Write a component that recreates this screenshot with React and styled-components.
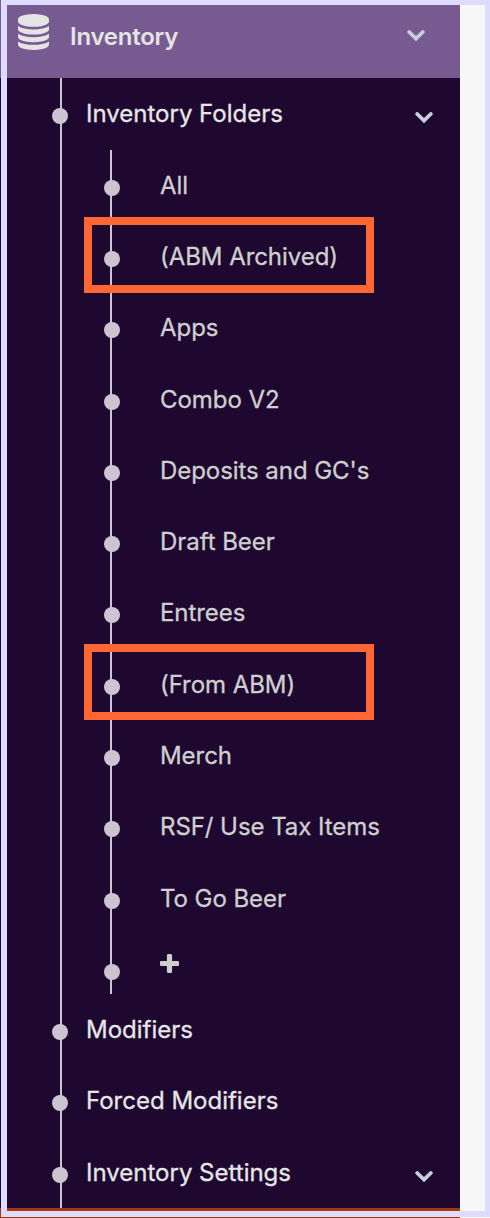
import React from "react";
import styled, { createGlobalStyle } from "styled-components";

const GlobalStyle = createGlobalStyle`
  *, *::before, *::after { box-sizing: border-box; }
  body { margin: 0; background: #f7f7f7; font-family: "Inter", sans-serif; }
  ul { list-style: none; margin: 0; padding: 0; }
`;

const Page = styled.main`
  position: relative;
  width: 490px;
  height: 1218px;
  overflow: hidden;
  background: #f7f7f7;
`;

const Frame = styled.div`
  position: absolute;
  inset: -1px -1px 1px 1px;
  border: 6px solid #dfdbff;
  pointer-events: none;
`;

const Sidebar = styled.nav`
  display: flex;
  flex-direction: column;
  width: 460px;
  height: 1218px;
  background: #1e0830;
`;

const Header = styled.header`
  display: flex;
  align-items: flex-start;
  height: 78px;
  padding: 14px 35px 0 18px;
  background: #765a90;
  color: #e4e4e4;
`;

const Title = styled.span`
  flex: 1;
  margin-left: 21px;
  font-size: 24px;
  font-weight: 600;
  line-height: 46px;
  letter-spacing: -0.24px;
`;

const HeaderChevron = styled.span`
  display: flex;
  margin-top: 16px;
`;

const Tree = styled.ul`
  flex: 1;
  background: linear-gradient(#cdc4d2, #cdc4d2) 60px 0 / 2px 100% no-repeat;
`;

const SubTree = styled.ul`
  height: 844.15px;
  background: linear-gradient(#cdc4d2, #cdc4d2) 110px 0 / 2px 100% no-repeat;
`;

const Row = styled.div`
  position: relative;
  display: flex;
  align-items: flex-start;
  height: ${(p) => p.$height || 71.27}px;
  padding-right: 27px;
  padding-left: ${(p) => (p.$nested ? 104 : 52)}px;
`;

const Dot = styled.span`
  flex: none;
  width: 16px;
  height: 16px;
  margin-top: 30px;
  border-radius: 50%;
  background: #cdc4d2;
`;

const Label = styled.span`
  flex: 1;
  margin-left: ${(p) => (p.$nested ? 40 : 18)}px;
  color: ${(p) => (p.$nested ? "#cfcfcf" : "#e6e6e6")};
  font-size: 24px;
  line-height: 71px;
  letter-spacing: ${(p) => (p.$nested ? -0.06 : 0)}px;
  -webkit-text-stroke: 0.3px currentColor;
  white-space: nowrap;
`;

const RowChevron = styled.span`
  display: flex;
  margin-top: 34px;
`;

const AddButton = styled.span`
  display: flex;
  margin: 20px 0 0 40px;
`;

const Highlight = styled.span`
  position: absolute;
  top: -4.4px;
  left: 84px;
  width: 290px;
  height: 76px;
  border: 8px solid #ff6633;
`;

const Footer = styled.div`
  height: 10px;
  background: #a5370f;
`;

const DatabaseIcon = () => (
  <svg width="31" height="36" viewBox="0 0 1536 1792" fill="#e4e4e4" preserveAspectRatio="none">
    <path d="M768 768q237 0 443-43t325-127v170q0 69-103 128t-280 93.5-385 34.5-385-34.5-280-93.5-103-128v-170q119 84 325 127t443 43zM768 1536q237 0 443-43t325-127v170q0 69-103 128t-280 93.5-385 34.5-385-34.5-280-93.5-103-128v-170q119 84 325 127t443 43zM768 1152q237 0 443-43t325-127v170q0 69-103 128t-280 93.5-385 34.5-385-34.5-280-93.5-103-128v-170q119 84 325 127t443 43zM768 0q208 0 385 34.5t280 93.5 103 128v128q0 69-103 128t-280 93.5-385 34.5-385-34.5-280-93.5-103-128v-128q0-69 103-128t280-93.5 385-34.5z" />
  </svg>
);

const ChevronIcon = () => (
  <svg width="18" height="12" viewBox="0 0 18 12" fill="none" stroke="#c5d0da" strokeWidth="3.8" strokeLinecap="round">
    <path d="M2.2 2L9 8.5L15.8 2" />
  </svg>
);

const PlusIcon = () => (
  <svg width="19" height="19" viewBox="0 128 1408 1408" fill="#cfcfcf">
    <path d="M1408 736v192q0 40-28 68t-68 28h-416v416q0 40-28 68t-68 28h-192q-40 0-68-28t-28-68v-416h-416q-40 0-68-28t-28-68v-192q0-40 28-68t68-28h416v-416q0-40 28-68t68-28h192q40 0 68 28t28 68v416h416q40 0 68 28t28 68z" />
  </svg>
);

const folders = [
  { name: "All" },
  { name: "(ABM Archived)", highlighted: true },
  { name: "Apps" },
  { name: "Combo V2" },
  { name: "Deposits and GC's" },
  { name: "Draft Beer" },
  { name: "Entrees" },
  { name: "(From ABM)", highlighted: true },
  { name: "Merch" },
  { name: "RSF/ Use Tax Items" },
  { name: "To Go Beer" },
];

const Section = ({ name, expandable, height }) => (
  <Row $height={height}>
    <Dot />
    <Label>{name}</Label>
    {expandable && <RowChevron><ChevronIcon /></RowChevron>}
  </Row>
);

export default function App() {
  return (
    <Page>
      <GlobalStyle />
      <Sidebar>
        <Header>
          <DatabaseIcon />
          <Title>Inventory</Title>
          <HeaderChevron><ChevronIcon /></HeaderChevron>
        </Header>
        <Tree>
          <li>
            <Section name="Inventory Folders" expandable height={71.85} />
            <SubTree>
              {folders.map((folder) => (
                <li key={folder.name}>
                  <Row $nested>
                    <Dot />
                    <Label $nested>{folder.name}</Label>
                    {folder.highlighted && <Highlight />}
                  </Row>
                </li>
              ))}
              <li>
                <Row $nested $height={60}>
                  <Dot />
                  <AddButton><PlusIcon /></AddButton>
                </Row>
              </li>
            </SubTree>
          </li>
          <li><Section name="Modifiers" /></li>
          <li><Section name="Forced Modifiers" /></li>
          <li><Section name="Inventory Settings" expandable /></li>
        </Tree>
        <Footer />
      </Sidebar>
      <Frame />
    </Page>
  );
}
